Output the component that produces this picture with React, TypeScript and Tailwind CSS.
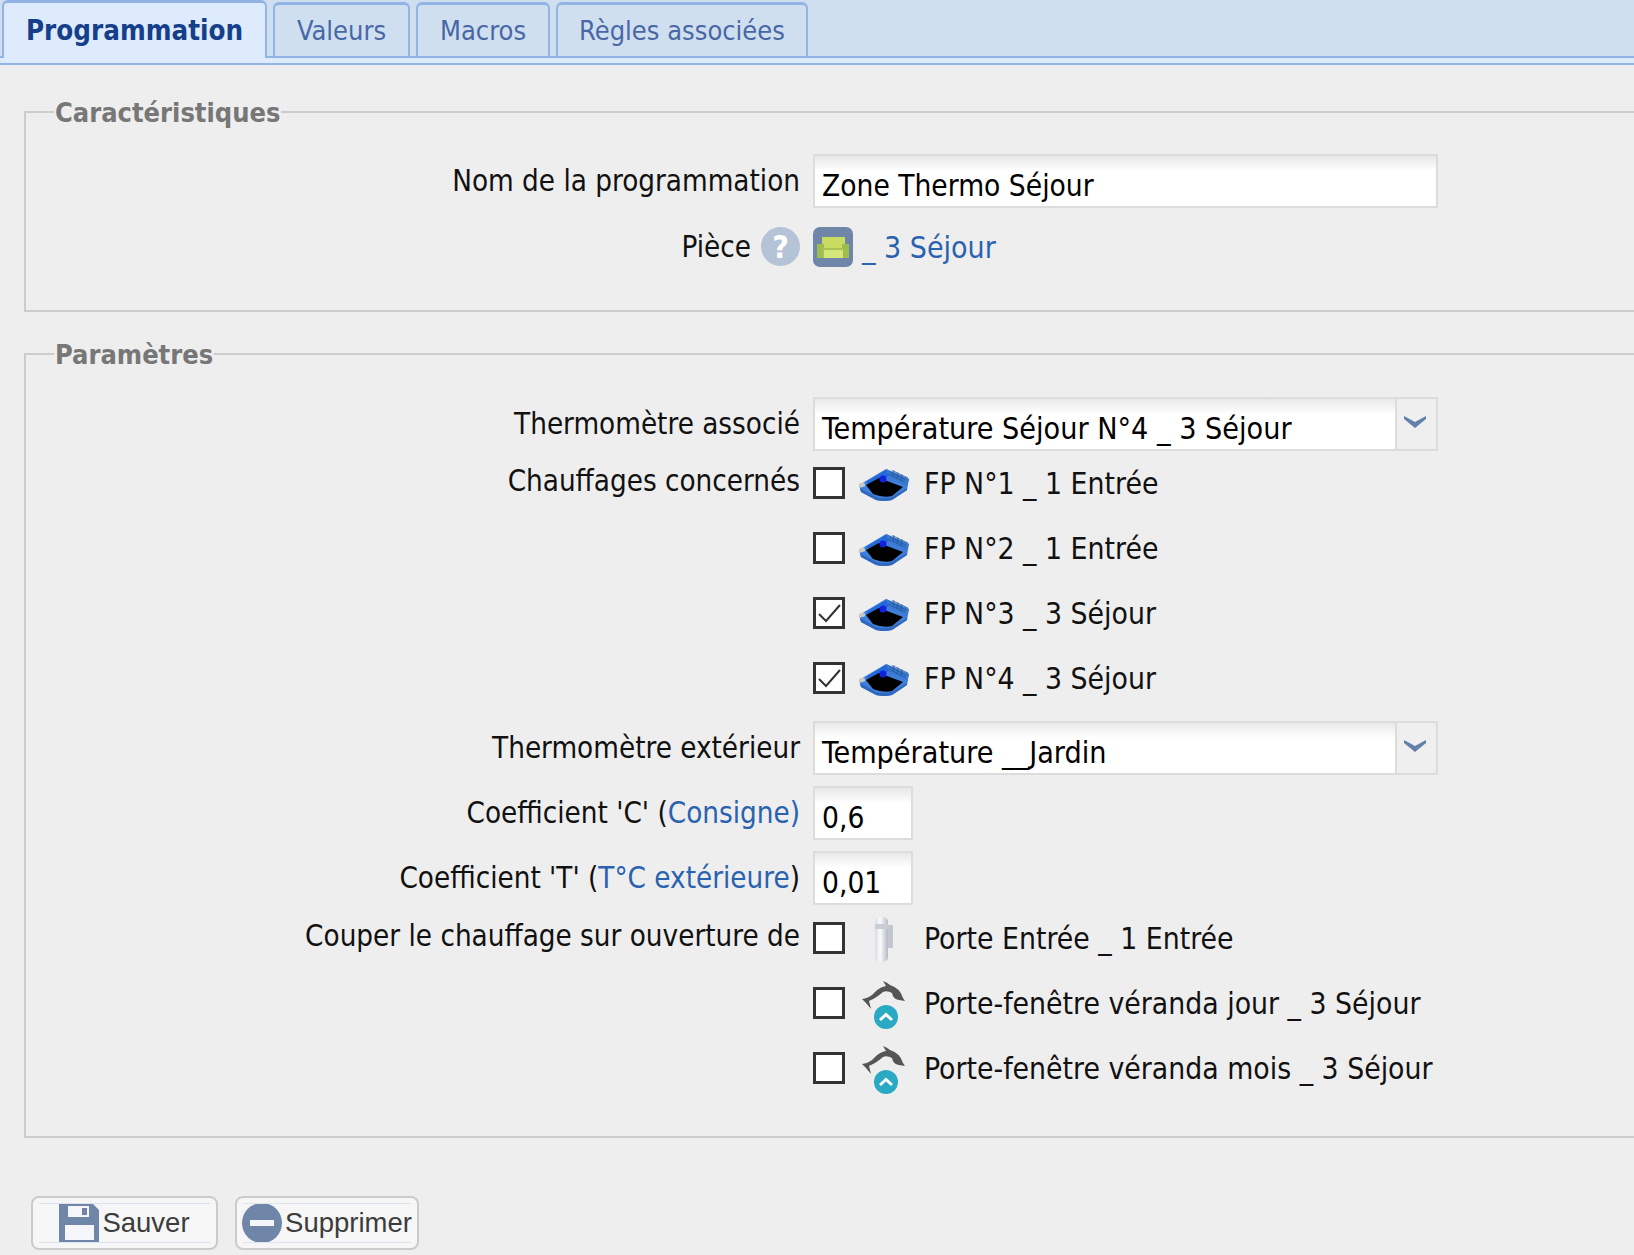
import React from "react";

const FONT = "font-['DejaVu_Sans_Condensed','DejaVu_Sans',sans-serif]";

function Heater() {
  return (
    <svg width="50" height="36" viewBox="0 0 50 36" className="shrink-0">
      <path d="M0 18 L27 2 L50 12 L48 23 L33 33 Q25 35 17 33 L2 25 Z" fill="#3f7fdc" />
      <path d="M2 25 L17 33 Q25 35 33 33 L48 23 L48 21 L33 30 Q25 32 17 30 L1 21 Z" fill="#2f68bd" />
      <path d="M7 15 L27 3 L30 9 L12 19 Z" fill="#2368d8" />
      <path d="M7 18 L20 11 L44 20 L33 29 Q24 31 14 27 Z" fill="#000" />
      <path d="M27 2 L50 12 L48 19 L30 10 Z" fill="#3a78cc" />
      <path d="M31 5 L47 13 M29 7 L46 15 M33 3.500 L49 11 M35 3.500 L34 10 M39 5.500 L38 12 M43 7.500 L42 14" stroke="#1f569f" strokeWidth="0.800" fill="none" />
      <circle cx="24" cy="12" r="3.500" fill="#1420e0" />
      <rect x="0" y="16" width="6" height="4" rx="1" fill="#c9c9c9" transform="rotate(-15 3 18)" />
    </svg>
  );
}

function Dolphin() {
  return (
    <svg width="44" height="48" viewBox="0 0 44 48" className="shrink-0">
      <path
        d="M21 0 Q26 2 28 4 Q38 7 41 17 L43 20 L37 19 Q31 18 30 12 Q25 9 21 11 Q14 17 9 19 L7 20 L9 28 L4 22 L0 18 Q8 17 13 11 Q18 6 24 5 Z"
        fill="#555"
      />
      <circle cx="24" cy="36" r="12" fill="#2aa9c4" />
      <path d="M18 39 L24 33.500 L30 39" stroke="#fff" strokeWidth="3" fill="none" />
    </svg>
  );
}

function DoorSensor() {
  return (
    <svg width="20" height="46" viewBox="0 0 20 46" className="shrink-0">
      <defs>
        <linearGradient id="door" x1="0" x2="1" y1="0" y2="0">
          <stop offset="0" stopColor="#d8dce2" />
          <stop offset="0.4" stopColor="#fafbfc" />
          <stop offset="1" stopColor="#b4bac4" />
        </linearGradient>
      </defs>
      <rect x="13" y="8" width="6" height="23" fill="#c2c7cf" />
      <rect x="1" y="0" width="13" height="45" rx="5" fill="url(#door)" />
      <rect x="1" y="7" width="13" height="5" fill="#c9ced5" />
    </svg>
  );
}

function Sofa() {
  return (
    <svg width="40" height="40" viewBox="0 0 40 40" className="shrink-0">
      <rect width="40" height="40" rx="7" fill="#6f86a8" />
      <rect x="9" y="10" width="23" height="12" fill="#c8dc62" />
      <rect x="4" y="17" width="7" height="14" fill="#9dbd4c" />
      <rect x="29" y="17" width="7" height="14" fill="#9dbd4c" />
      <rect x="10" y="21" width="20" height="10" fill="#a9c455" />
      <rect x="11" y="23" width="19" height="8" fill="#d6e67a" />
    </svg>
  );
}

function Row({ label, children, h, pt }: { label: React.ReactNode; children: React.ReactNode; h: string; pt: string }) {
  return (
    <div className={`flex items-start gap-[13px] ${h}`}>
      <div className={`w-[774px] shrink-0 text-right text-[29.300px] leading-[36px] text-[#111] ${pt}`}>{label}</div>
      <div className="min-w-0 flex-1">{children}</div>
    </div>
  );
}

function TextBox({ value, w }: { value: string; w: string }) {
  return (
    <div className={`flex h-[54px] items-center border-2 border-[#dcdcdc] bg-gradient-to-b from-[#e8e8e8] from-0% to-white to-30% pl-[7px] pt-[10px] text-black ${w}`}>
      {value}
    </div>
  );
}

function SelectBox({ value }: { value: string }) {
  return (
    <div className="flex h-[54px] w-[625px] border-2 border-[#dcdcdc] text-black">
      <div className="flex flex-1 items-center bg-gradient-to-b from-[#e8e8e8] from-0% to-white to-30% pl-[7px] pt-[10px] text-[30.200px]">{value}</div>
      <div className="flex w-[41px] justify-center border-l-2 border-[#dcdcdc] bg-[#efefef] pr-[4px] pt-[16px]">
        <svg width="24" height="14" viewBox="0 0 24 14">
          <path d="M1 1 L12 7 L23 1 L23 4 L12 13 L1 4 Z" fill="#6280aa" />
        </svg>
      </div>
    </div>
  );
}

function Check({ on, icon, text }: { on?: boolean; icon: React.ReactNode; text: string }) {
  return (
    <div className="flex h-[65px] items-center text-[29.800px] text-[#111]">
      <div className="-mt-[4px] flex h-8 w-8 shrink-0 items-center justify-center border-[3px] border-[#333] bg-white">
        {on && (
          <svg width="26" height="26" viewBox="0 0 26 26">
            <path d="M3 14 L10 21 L24 5" stroke="#333" strokeWidth="2" fill="none" />
          </svg>
        )}
      </div>
      <div className="flex w-[79px] shrink-0 justify-center pr-[2px]">{icon}</div>
      <span>{text}</span>
    </div>
  );
}

function Tab({ label, w }: { label: string; w: string }) {
  return (
    <div className={`flex h-[54px] items-center justify-center rounded-t-md border-x-2 border-t-[3px] border-[#92b4e4] bg-[#d0dff0] pt-[2px] text-[27px] text-[#4868a5] ${w}`}>
      {label}
    </div>
  );
}

function Fieldset({ title, className, children }: { title: string; className: string; children: React.ReactNode }) {
  return (
    <fieldset className={`ml-6 w-[1700px] border-2 border-[#cccccc] ${className}`}>
      <legend className="ml-[28px] px-[1px] pt-[2px] text-[27px] font-bold leading-[36px] text-[#777]">{title}</legend>
      {children}
    </fieldset>
  );
}

function Btn({ icon, text, w }: { icon: React.ReactNode; text: string; w: string }) {
  return (
    <div className={`relative flex h-[54px] items-center justify-center gap-[3px] rounded-lg border-2 border-[#cbcbcb] bg-[#f6f6f6] font-['Liberation_Sans',sans-serif] text-[27.500px] text-[#3c3c3c] ${w}`}>
      <div className="absolute inset-x-[6px] top-[5px] h-[1px] bg-[#dbe4ef]" />
      <div className="absolute inset-x-[6px] bottom-[5px] h-[1px] bg-[#dbe4ef]" />
      {icon}
      {text}
    </div>
  );
}

export default function App() {
  return (
    <div className={`h-[1255px] w-full overflow-hidden bg-[#eeeeee] text-[29.600px] ${FONT}`}>
      <div className="flex h-[58px] items-end gap-[6px] border-b-2 border-[#92b4e4] bg-[#d0dff0] pl-[2px]">
        <div className="z-10 -mb-[2px] flex h-[58px] w-[265px] items-center justify-center rounded-t-md border-x-2 border-t-[3px] border-[#92b4e4] bg-[#deebfd] text-[27.500px] font-bold text-[#153f8a]">
          Programmation
        </div>
        <Tab label="Valeurs" w="w-[137px]" />
        <Tab label="Macros" w="w-[134px]" />
        <Tab label="Règles associées" w="w-[252px]" />
      </div>
      <div className="h-[7px] border-b-2 border-[#92b4e4] bg-[#deebfd]" />

      <Fieldset title="Caractéristiques" className="mt-[28px] h-[219px] pt-[23px]">
        <Row label="Nom de la programmation" h="h-[73px]" pt="pt-[9px]">
          <TextBox value="Zone Thermo Séjour" w="w-[625px]" />
        </Row>
        <Row
          pt="pt-0"
          label={
            <span className="flex items-center justify-end gap-[10px]">
              Pièce
              <span className="flex h-[39px] w-[39px] items-center justify-center rounded-full bg-[#b4c3d6] text-[32px] font-bold text-white">?</span>
            </span>
          }
          h="h-[40px]"
        >
          <div className="flex h-10 items-center gap-[9px] text-[30px] text-[#2a62b0]">
            <Sofa />
            <span>_ 3 Séjour</span>
          </div>
        </Row>
      </Fieldset>

      <Fieldset title="Paramètres" className="mt-[23px] h-[803px] pt-[24px]">
        <Row label="Thermomètre associé" h="h-[55px]" pt="pt-[9px]">
          <SelectBox value="Température Séjour N°4 _ 3 Séjour" />
        </Row>
        <Row label="Chauffages concernés" h="h-[269px]" pt="pt-[11px]">
          <Check icon={<Heater />} text="FP N°1 _ 1 Entrée" />
          <Check icon={<Heater />} text="FP N°2 _ 1 Entrée" />
          <Check on icon={<Heater />} text="FP N°3 _ 3 Séjour" />
          <Check on icon={<Heater />} text="FP N°4 _ 3 Séjour" />
        </Row>
        <Row label="Thermomètre extérieur" h="h-[65px]" pt="pt-[9px]">
          <SelectBox value="Température __Jardin" />
        </Row>
        <Row label={<>Coefficient 'C' (<span className="text-[#2a62b0]">Consigne)</span></>} h="h-[65px]" pt="pt-[9px]">
          <TextBox value="0,6" w="w-[100px]" />
        </Row>
        <Row label={<>Coefficient 'T' (<span className="text-[#2a62b0]">T°C extérieure</span>)</>} h="h-[56px]" pt="pt-[9px]">
          <TextBox value="0,01" w="w-[100px]" />
        </Row>
        <Row label="Couper le chauffage sur ouverture de" h="h-[195px]" pt="pt-[11px]">
          <Check icon={<DoorSensor />} text="Porte Entrée _ 1 Entrée" />
          <Check icon={<Dolphin />} text="Porte-fenêtre véranda jour _ 3 Séjour" />
          <Check icon={<Dolphin />} text="Porte-fenêtre véranda mois _ 3 Séjour" />
        </Row>
      </Fieldset>

      <div className="ml-[31px] mt-[58px] flex gap-[17px]">
        <Btn
          w="w-[187px]"
          text="Sauver"
          icon={
            <svg width="40" height="40" viewBox="0 0 40 40">
              <path d="M0 0 H33 L40 7 V40 H0 Z" fill="#6f86a8" />
              <rect x="9" y="3" width="21" height="11" fill="#f4f6f9" />
              <rect x="23" y="5" width="5" height="7" fill="#6f86a8" />
              <rect x="6" y="22" width="29" height="15" fill="#f4f6f9" />
            </svg>
          }
        />
        <Btn
          w="w-[184px]"
          text="Supprimer"
          icon={
            <svg width="40" height="40" viewBox="0 0 40 40">
              <circle cx="20" cy="20" r="20" fill="#6f86a8" />
              <rect x="8" y="17" width="24" height="6" fill="#f4f6f9" />
            </svg>
          }
        />
      </div>
    </div>
  );
}
